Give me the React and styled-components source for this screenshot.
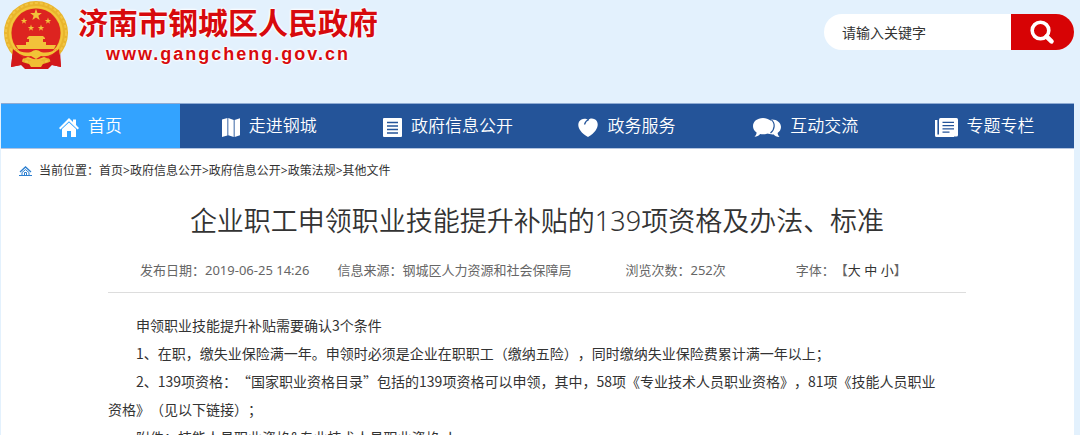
import React from 'react';
import styled, { createGlobalStyle, css } from 'styled-components';

const sans = '"Noto Sans", "Noto Sans CJK SC", sans-serif';

const navItems = [
  { label: '首页', icon: 'home', active: true },
  { label: '走进钢城', icon: 'map' },
  { label: '政府信息公开', icon: 'list' },
  { label: '政务服务', icon: 'heart' },
  { label: '互动交流', icon: 'chat' },
  { label: '专题专栏', icon: 'news' },
];

const crumbs = ['首页', '政府信息公开', '政府信息公开', '政策法规', '其他文件'];

const STAR = '0,-10 2.4,-3.2 9.5,-3.1 3.8,1.2 5.9,8.1 0,4 -5.9,8.1 -3.8,1.2 -9.5,-3.1 -2.4,-3.2';

const Emblem = () => (
  <svg width="66" height="70" viewBox="0 0 66 70" aria-hidden="true">
    <path d="M10 50 L8 67 L18 65 L22 69 H45 L49 65 L58 67 L57 50 Z" fill="#cf1418" />
    <circle cx="33" cy="33" r="32" fill="#e9b52c" />
    <circle cx="33" cy="33" r="30" fill="none" stroke="#f2c544" strokeWidth="2" strokeDasharray="3 2" />
    <circle cx="33" cy="33" r="26" fill="none" stroke="#f3c63c" strokeWidth="2" />
    <circle cx="33" cy="33" r="24.5" fill="#dd2420" />
    <g fill="#f2c23a">
      <polygon points={STAR} transform="translate(33 15) scale(.62)" />
      <polygon points={STAR} transform="translate(21 21) scale(.34)" />
      <polygon points={STAR} transform="translate(45 21) scale(.34)" />
      <polygon points={STAR} transform="translate(28 28) scale(.34)" />
      <polygon points={STAR} transform="translate(38 28) scale(.34)" />
      <path d="M24 38 L26 36 H40 L42 38 V39 H40 V42 H43 V45 H53 L51 49 H15 L13 45 H23 V42 H26 V39 H24 Z" />
    </g>
    <path d="M12 49 Q22 55 28 52 Q33 49 38 52 Q44 55 54 49 L52 58 Q46 60 41 57 L33 60 L25 57 Q20 60 14 58 Z" fill="#e02420" />
    <path
      d="M10 48 Q20 54 28 52 Q33 48 38 52 Q46 54 56 48 Q48 58 38 56 L33 59 L28 56 Q18 58 10 48 Z"
      fill="#f1c337"
    />
    <path d="M10 49 L20 58 L18 65 L8 67 Z M56 49 L46 58 L49 65 L58 67 Z" fill="#d3191b" />
    <path d="M25 62 Q33 56 41 62 L38 67 H28 Z" fill="#f0bd33" />
  </svg>
);

const icons = {
  home: (
    <svg width="20" height="19" viewBox="0 0 20 19" fill="currentColor">
      <path d="M10 0 L14 4 V1.5 H17 V7 L20 10 L18.6 11.4 L10 3.2 L1.4 11.4 L0 10 Z" />
      <path d="M10 4.4 L17 11 V19 H12 V13 H8 V19 H3 V11 Z" />
    </svg>
  ),
  map: (
    <svg width="18" height="19" viewBox="0 0 18 19" fill="currentColor">
      <path d="M0 1.5 L5.4 0 V17.5 L0 19 Z M6.3 0 L11.7 2 V19 L6.3 17.2 Z M12.6 2 L18 .3 V17.2 L12.6 19 Z" />
    </svg>
  ),
  list: (
    <svg width="19" height="19" viewBox="0 0 19 19">
      <rect width="19" height="19" rx="1" fill="currentColor" />
      <path d="M4 4.5 H15 M4 8 H15 M4 11.5 H15 M4 15 H15" stroke="#245499" strokeWidth="1.4" />
    </svg>
  ),
  heart: (
    <svg width="20" height="19" viewBox="0 0 20 19">
      <path
        d="M10 2 C12 -.3 17 0 19 3.4 C21 7.5 19 14 10 19 C1 14 -1 7.5 1 3.8 C3 .5 7.5 -.3 10 2 Z"
        fill="currentColor"
      />
      <path d="M11 1.5 C8 2.5 7 4.5 6.5 6.5" fill="none" stroke="#245499" strokeWidth="1.2" />
    </svg>
  ),
  chat: (
    <svg width="28" height="19" viewBox="0 0 28 19">
      <path
        d="M18 1.5 C23.5 1 28 4.5 28 9 C28 11.6 26.6 13.6 24.6 15 C24.8 16.8 25.5 17.8 26.5 19 C23.5 18.8 21.8 17.8 20.8 16.4 C18.5 16.6 16 16.2 14 15 Z"
        fill="currentColor"
      />
      <path
        d="M10 0 C15.8 0 20 3.6 20 8.2 C20 12.8 15.8 16.3 10 16.3 C9 16.3 8 16.2 7.2 16 C5.5 17.8 4 18.6 1.5 18.8 C2.9 17.5 3.5 16.2 3.6 14.5 C1.3 13 0 10.8 0 8.2 C0 3.6 4.2 0 10 0 Z"
        fill="currentColor"
      />
      <path d="M18.2 1.6 C22.5 5 22 11.5 17.5 15" fill="none" stroke="#245499" strokeWidth="1.2" />
    </svg>
  ),
  news: (
    <svg width="23" height="19" viewBox="0 0 23 19">
      <path d="M0 2 H2.4 V16.6 H19 V19 H1.5 Q0 19 0 17.5 Z" fill="currentColor" />
      <rect x="4" width="19" height="18.5" rx="1.5" fill="currentColor" />
      <path d="M7.5 4.3 H19 M7.5 7.6 H19 M7.5 10.9 H19 M7.5 14.2 H14.5" stroke="#245499" strokeWidth="1.3" />
    </svg>
  ),
};

const App = () => (
  <Page>
    <GlobalStyle />
    <Header>
      <Brand href="#">
        <Emblem />
        <BrandText>
          <SiteName>济南市钢城区人民政府</SiteName>
          <SiteUrl>www.gangcheng.gov.cn</SiteUrl>
        </BrandText>
      </Brand>
      <SearchForm role="search" onSubmit={(e) => e.preventDefault()}>
        <SearchInput type="text" placeholder="请输入关键字" aria-label="请输入关键字" />
        <SearchButton type="submit" aria-label="搜索">
          <svg width="26" height="25" viewBox="0 0 26 25" fill="none" stroke="currentColor">
            <circle cx="10.5" cy="10.5" r="8.3" strokeWidth="3.6" />
            <path d="M16.5 16.5 L21.5 21.3" strokeWidth="4.6" strokeLinecap="round" />
          </svg>
        </SearchButton>
      </SearchForm>
    </Header>

    <Nav>
      {navItems.map((item) => (
        <NavLink key={item.label} href="#" $active={item.active}>
          <NavIcon>{icons[item.icon]}</NavIcon>
          {item.label}
        </NavLink>
      ))}
    </Nav>

    <Content>
      <Breadcrumb aria-label="当前位置">
        <svg width="13" height="10" viewBox="0 0 13 10" fill="none" stroke="#2c7fd0">
          <path d="M1 6 L6.5 1 L12 6" strokeWidth="1.3" />
          <path d="M3 9 V6.5 L6.5 3.6 L10 6.5 V9" />
          <path d="M5.5 9 V6.5 H7.5 V9" />
          <path d="M0 9.5 H13" />
        </svg>
        <span>
          当前位置：
          {crumbs.map((crumb, index) => (
            <React.Fragment key={index}>
              {index > 0 && '>'}
              <CrumbLink href="#">{crumb}</CrumbLink>
            </React.Fragment>
          ))}
        </span>
      </Breadcrumb>

      <Article>
        <Title>企业职工申领职业技能提升补贴的139项资格及办法、标准</Title>
        <Meta>
          <MetaItem $gap={28}>发布日期：2019-06-25 14:26</MetaItem>
          <MetaItem $gap={54}>信息来源：钢城区人力资源和社会保障局</MetaItem>
          <MetaItem $gap={70}>浏览次数：252次</MetaItem>
          <MetaItem>
            字体：【<SizeButton type="button">大</SizeButton> <SizeButton type="button">中</SizeButton>{' '}
            <SizeButton type="button">小</SizeButton>】
          </MetaItem>
        </Meta>
        <Body>
          <p>申领职业技能提升补贴需要确认3个条件</p>
          <p>1、在职，缴失业保险满一年。申领时必须是企业在职职工（缴纳五险），同时缴纳失业保险费累计满一年以上；</p>
          <p>
            2、139项资格：“国家职业资格目录”包括的139项资格可以申领，其中，58项《专业技术人员职业资格》，81项《技能人员职业资格》（见以下链接）；
          </p>
          <p>附件：技能人员职业资格&amp;专业技术人员职业资格.doc</p>
        </Body>
      </Article>
    </Content>
  </Page>
);

// Styled components
const GlobalStyle = createGlobalStyle`
  * {
    box-sizing: border-box;
  }

  body {
    margin: 0;
    background: #e3f1fd;
    font-family: ${sans};
    color: #333;
    text-spacing-trim: space-all;
  }

  a {
    color: inherit;
    text-decoration: none;
  }

  p {
    margin: 0;
  }
`;

const Page = styled.div`
  display: flex;
  flex-direction: column;
  height: 100vh;
  overflow: hidden;
  padding: 0 6px 0 1px;
`;

const Header = styled.header`
  display: flex;
  flex: none;
  justify-content: space-between;
  align-items: flex-start;
  height: 103px;
`;

const Brand = styled.a`
  display: flex;
  gap: 9px;
  padding-left: 2px;
  color: #d70a0d;
`;

const BrandText = styled.span`
  display: flex;
  flex-direction: column;
  align-items: center;
  text-shadow: 0 0 2px #fff, 0 0 2px #fff, 0 0 3px #fff, 0 0 3px #fff;
`;

const SiteName = styled.span`
  font: 700 30px/42px "Noto Sans CJK SC", sans-serif;
`;

const SiteUrl = styled.span`
  font: 700 18px/24px "Liberation Sans", sans-serif;
  letter-spacing: 2px;
`;

const SearchForm = styled.form`
  display: flex;
  width: 250px;
  height: 36px;
  margin-top: 14px;
  border-radius: 18px;
  overflow: hidden;
  background: #fff;
`;

const SearchInput = styled.input`
  flex: 1;
  min-width: 0;
  padding: 0 18px;
  border: 0;
  background: none;
  color: #333;
  font: 14px ${sans};

  &::placeholder {
    color: #333;
    opacity: 1;
  }
`;

const SearchButton = styled.button`
  display: flex;
  align-items: center;
  justify-content: center;
  width: 63px;
  padding: 0;
  border: 0;
  background: #d70305;
  color: #fff;
`;

const Nav = styled.nav`
  display: grid;
  flex: none;
  grid-template-columns: repeat(6, 1fr);
  height: 46px;
  border-top: 1px solid #8fabd3;
  border-bottom: 1px solid #b3c4e0;
  background: #245499;
`;

const NavLink = styled.a`
  display: flex;
  align-items: center;
  justify-content: center;
  gap: 9px;
  color: #fff;
  font-size: 17px;
  font-weight: 350;
  line-height: 24px;

  ${({ $active }) => $active && css`
    background: #33a3ff;
  `}
`;

const NavIcon = styled.span`
  display: flex;
  padding-top: 3px;
`;

const Content = styled.main`
  flex: 1;
  background: #fff;
`;

const Breadcrumb = styled.nav`
  display: flex;
  align-items: center;
  gap: 7px;
  padding: 12px 18px 0;
  font-size: 12px;
  line-height: 20px;
`;

const CrumbLink = styled.a`
  &:hover {
    text-decoration: underline;
  }
`;

const Article = styled.article`
  margin: 0 108px 0 107px;
`;

const Title = styled.h1`
  margin: 0;
  padding-top: 20px;
  font-size: 27px;
  font-weight: 350;
  line-height: 40px;
  text-align: center;
`;

const Meta = styled.div`
  display: flex;
  margin-top: 17px;
  padding: 0 32px 10px;
  border-bottom: 1px solid #ddd;
  color: #666;
  font-size: 13px;
  line-height: 24px;
  white-space: nowrap;
`;

const MetaItem = styled.span`
  margin-right: ${({ $gap = 0 }) => $gap}px;
`;

const SizeButton = styled.button`
  padding: 0;
  border: 0;
  background: none;
  color: #333;
  font: inherit;
`;

// CJK face first so that the quotation marks stay full width
const Body = styled.div`
  padding: 18px 20px 0 0;
  font-family: "Noto Sans CJK SC", sans-serif;
  font-size: 14px;
  line-height: 28px;

  p {
    text-indent: 2em;
  }
`;

export default App;
